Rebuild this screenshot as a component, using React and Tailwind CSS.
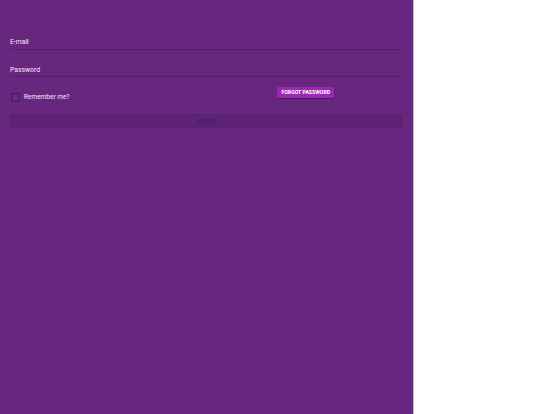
import { useState } from "react";

const App = () => {
  const [remember, setRemember] = useState(false);

  return (
    <div className="flex h-[414px] w-full bg-white font-['Roboto',sans-serif]">
      <div className="h-full w-[414px] border-r border-[#cdb3d6] bg-[#68277f] px-[10px] pt-[37px]">
        <div className="text-[6.8px] leading-[10px] text-[#f5eaf8]">E-mail</div>
        <div className="mt-[2px] h-px bg-[#55206a]"></div>

        <div className="mt-[15px] text-[6.8px] leading-[10px] text-[#f5eaf8]">Password</div>
        <div className="mt-[1px] h-px bg-[#55206a]"></div>

        <div className="mt-[10px] grid grid-cols-2 gap-[4px]">
          <label className="mt-[5px] flex items-center gap-[4px]">
            <input
              type="checkbox"
              checked={remember}
              onChange={(e) => setRemember(e.target.checked)}
              className="ml-[1px] h-[9px] w-[9px] appearance-none rounded-[1px] border-[1.5px] border-[#46165b]"
            />
            <span className="text-[6.5px] leading-[10px] text-[#f5eaf8]">Remember me?</span>
          </label>
          <div className="flex justify-center">
            <button className="h-[11px] rounded-[1px] bg-[#9c27b0] px-[4px] text-[5.2px] font-bold uppercase leading-[11px] text-white shadow-[0_1px_1px_rgba(0,0,0,0.3)]">
              Forgot password
            </button>
          </div>
        </div>

        <button className="mt-[12px] h-[14px] w-full bg-[#5c2273] text-[5px] font-medium uppercase leading-[14px] text-[#4c1a60]">
          Submit
        </button>
      </div>
    </div>
  );
};

export default App;
